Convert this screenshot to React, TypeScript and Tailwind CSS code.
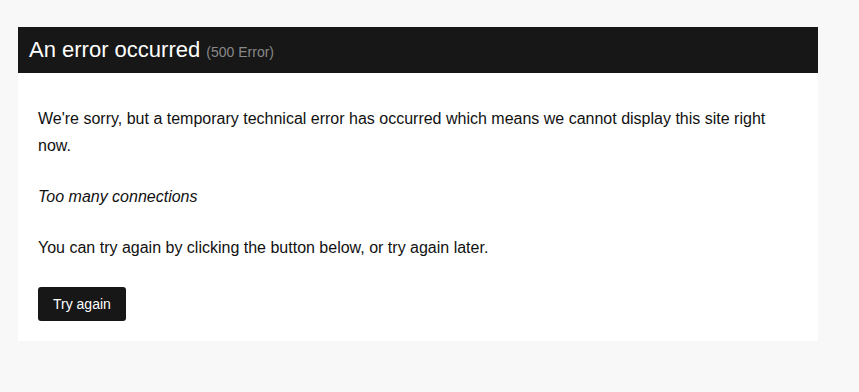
import React from "react";

const App = () => {
  return (
    <div className="min-h-[392px] w-full bg-[#f8f8f8] pt-[27px] font-['Liberation_Sans',Arial,sans-serif]">
      <div className="ml-[18px] w-[800px]">
        <div className="flex h-[46px] items-center bg-[#171717] px-[11px]">
          <h1 className="text-[22px] leading-none text-white">
            An error occurred{" "}
            <small className="text-[14px] text-[#888888]">(500 Error)</small>
          </h1>
        </div>
        <div className="bg-white px-5 pt-[32px] pb-5 text-[16px] leading-[27px] text-[#111111]">
          <p className="mb-6">
            We're sorry, but a temporary technical error has occurred which means we cannot display this site right now.
          </p>
          <p className="mb-6 italic">Too many connections</p>
          <p className="mb-[26px]">
            You can try again by clicking the button below, or try again later.
          </p>
          <button className="h-[34px] rounded-[3px] bg-[#171717] px-[15px] text-[14px] text-white">
            Try again
          </button>
        </div>
      </div>
    </div>
  );
};

export default App;
